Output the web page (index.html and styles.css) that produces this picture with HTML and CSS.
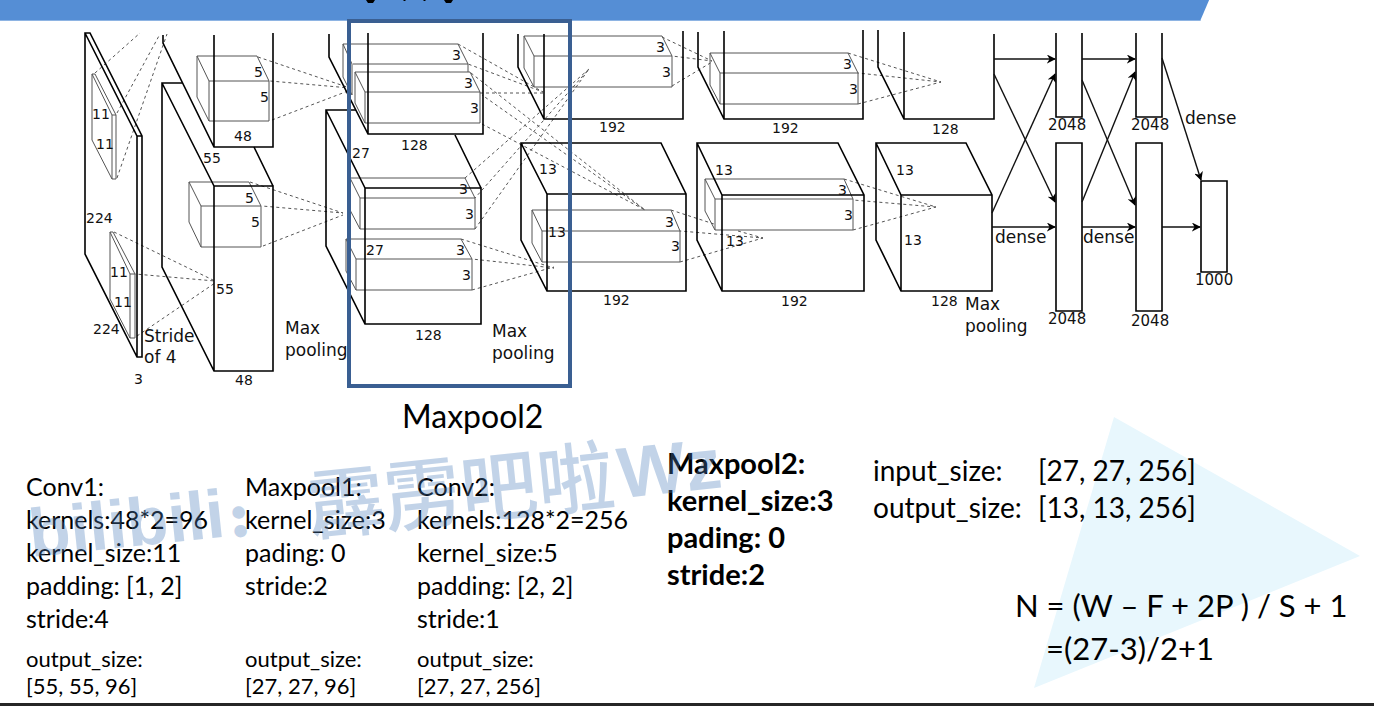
FILE: index.html
```html
<!DOCTYPE html>
<html lang="en">
<head>
<meta charset="utf-8">
<title>Maxpool2</title>
<link rel="stylesheet" href="styles.css">
</head>
<body>
<main class="slide">
  <header class="banner"></header>

  <figure class="network">
    <svg class="diagram" viewBox="0 21 1374 370" role="img" aria-label="Network architecture">
      <defs>
        <marker id="arrow" viewBox="0 0 10 10" refX="9" refY="5" markerWidth="9" markerHeight="9" markerUnits="userSpaceOnUse" orient="auto">
          <path d="M0 0L10 5L0 10L3 5Z"/>
        </marker>
      </defs>

      <!-- lower edge of the clipped title -->
      <path class="title-edge" d="M366 0H375L373 3H368ZM403 0H406L405 1H404ZM423 0H426L425 1H424ZM444 0H453L451 3H446Z"/>

      <g class="thin">
        <path d="M92 74H95L116 115V179H112L92 140ZL112 115H116M112 115V179"/>
        <path d="M110 232H113L135 274V338H130L110 299ZL130 274H135M130 274V338"/>
        <path d="M197 56H257L269 81V121H209L197 97ZL209 81H269M209 81V121"/>
        <path d="M189 182H249L261 206V247H201L189 222ZL201 206H261M201 206V247"/>
        <path d="M343 44H458L468 64V72M343 44V77L352 95V64L343 44M353 64H468"/>
        <path d="M355 72H470L480 92V123H365L355 103ZL365 92H480M365 92V123"/>
        <path d="M350 178H465L475 198V229H360L350 210ZL360 198H475M360 198V229"/>
        <path d="M346 239H461L472 259V290H356L346 271ZL356 259H472M356 259V290"/>
        <path d="M524 36H662L672 56V87H534L524 68ZL534 56H672M534 56V87"/>
        <path d="M532 210H671L680 231V262H542L532 243ZL542 231H680M542 231V262"/>
        <path d="M710 53H848L858 73V104H720L710 85ZL720 73H858M720 73V104"/>
        <path d="M705 179H844L853 199V230H715L705 211ZL715 199H853M715 199V230"/>
      </g>

      <g class="dashed">
        <path d="M95 73L140 33M117 113L160 34M117 178L167 34"/>
        <path d="M114 232L215 281L135 274M137 336L215 283"/>
        <path d="M258 57L350 88L270 81M272 120L348 91"/>
        <path d="M250 182L343 213L262 206M263 246L343 215"/>
        <path d="M458 44L543 92L468 64M480 93H543"/>
        <path d="M471 73L645 210L482 95M482 124L645 210"/>
        <path d="M465 178L589 69L475 198M475 229L589 69"/>
        <path d="M461 239L554 268L472 259M472 290L554 267"/>
        <path d="M662 37L712 61L672 56M672 86L712 62"/>
        <path d="M671 210L714 224M738 231L763 238L680 231M680 262L763 238"/>
        <path d="M848 53L941 82L858 73M858 104L941 82"/>
        <path d="M844 179L936 207L853 200M853 230L936 207"/>
      </g>

      <g class="solid">
        <path d="M85 33H90L142 136V357H137L85 254ZL137 136H142M137 136V357"/>
        <path d="M163 35V43L214 147H273V33M214 35V147"/>
        <path d="M182 83H162V267L214 371H273V186H214V371M162 83L214 186M254 147L273 186"/>
        <path d="M329 34V57L368 134H483V33M368 33V134"/>
        <path d="M356 110H326V246L365 324H481V188H365V324M326 110L365 188M455 135L481 188"/>
        <path d="M518 34V67L544 119H683V31M544 34V119"/>
        <path d="M521 143H661L686 194V291H547L521 240ZL547 194H686M547 194V291"/>
        <path d="M698 32V67L724 119H863V30M724 31V119"/>
        <path d="M697 143H838L864 195V291H722L697 240ZL722 195H864M722 195V291"/>
        <path d="M878 30V67L904 119H994V34M904 32V119"/>
        <path d="M876 143H966L992 195V291H901L876 240ZL901 195H992M901 195V291"/>
        <path d="M1056 33V117H1082V33M1136 33V117H1162V33"/>
        <path d="M1056 143H1082V311H1056ZM1136 143H1162V311H1136ZM1201 181H1227V272H1201Z"/>
      </g>

      <g class="arrows">
        <path d="M994 59H1055"/><path d="M994 74L1055 202"/>
        <path d="M992 213L1055 74"/><path d="M992 227H1055"/>
        <path d="M1082 59H1135"/><path d="M1082 80L1135 205"/>
        <path d="M1082 202L1135 72"/><path d="M1082 227H1135"/>
        <path d="M1162 58L1201 180"/><path d="M1162 227H1200"/>
      </g>

      <rect class="highlight" x="349" y="21" width="221" height="365"/>

      <g class="num">
        <text x="92" y="119">11</text><text x="96" y="149">11</text>
        <text x="86" y="223">224</text><text x="110" y="277">11</text>
        <text x="114" y="307">11</text><text x="93" y="334">224</text>
        <text x="134" y="384">3</text>
        <text x="254" y="77">5</text><text x="260" y="102">5</text>
        <text x="234" y="141">48</text><text x="203" y="163">55</text>
        <text x="245" y="203">5</text><text x="251" y="227">5</text>
        <text x="216" y="294">55</text><text x="235" y="385">48</text>
        <text x="452" y="60">3</text><text x="464" y="88">3</text><text x="470" y="113">3</text>
        <text x="401" y="150">128</text><text x="352" y="158">27</text>
        <text x="459" y="194">3</text><text x="465" y="219">3</text>
        <text x="366" y="255">27</text><text x="456" y="255">3</text><text x="462" y="280">3</text>
        <text x="415" y="340">128</text>
        <text x="656" y="52">3</text><text x="662" y="77">3</text><text x="599" y="132">192</text>
        <text x="539" y="174">13</text><text x="548" y="237">13</text>
        <text x="665" y="227">3</text><text x="671" y="251">3</text><text x="603" y="305">192</text>
        <text x="843" y="69">3</text><text x="849" y="94">3</text><text x="772" y="133">192</text>
        <text x="715" y="175">13</text><text x="726" y="246">13</text>
        <text x="838" y="195">3</text><text x="844" y="220">3</text><text x="781" y="306">192</text>
        <text x="932" y="134">128</text><text x="896" y="175">13</text>
        <text x="904" y="245">13</text><text x="931" y="306">128</text>
      </g>
      <g class="units">
        <text x="1048" y="130">2048</text><text x="1131" y="130">2048</text>
        <text x="1048" y="324">2048</text><text x="1131" y="326">2048</text>
        <text x="1195" y="285">1000</text>
      </g>
      <g class="word">
        <text x="144" y="342">Stride</text><text x="144" y="363">of 4</text>
        <text x="285" y="334">Max</text><text x="285" y="356">pooling</text>
        <text x="492" y="337">Max</text><text x="492" y="359">pooling</text>
        <text x="965" y="310">Max</text><text x="965" y="332">pooling</text>
        <text x="995" y="243">dense</text><text x="1083" y="243">dense</text>
        <text x="1185" y="124">dense</text>
      </g>
    </svg>
    <figcaption class="caption">Maxpool2</figcaption>
  </figure>

  <section class="notes">
    <div class="layer">
      <div class="params">
        <p>Conv1:</p><p>kernels:48*2=96</p><p>kernel_size:11</p><p>padding: [1, 2]</p><p>stride:4</p>
      </div>
      <div class="output"><p>output_size:</p><p>[55, 55, 96]</p></div>
    </div>
    <div class="layer">
      <div class="params">
        <p>Maxpool1:</p><p>kernel_size:3</p><p>pading: 0</p><p>stride:2</p>
      </div>
      <div class="output"><p>output_size:</p><p>[27, 27, 96]</p></div>
    </div>
    <div class="layer">
      <div class="params">
        <p>Conv2:</p><p>kernels:128*2=256</p><p>kernel_size:5</p><p>padding: [2, 2]</p><p>stride:1</p>
      </div>
      <div class="output"><p>output_size:</p><p>[27, 27, 256]</p></div>
    </div>
    <div class="current">
      <p>Maxpool2:</p><p>kernel_size:3</p><p>pading: 0</p><p>stride:2</p>
    </div>
    <div class="result">
      <dl class="sizes">
        <dt>input_size:</dt><dd>[27, 27, 256]</dd>
        <dt>output_size:</dt><dd>[13, 13, 256]</dd>
      </dl>
      <div class="formula">
        <p>N = (W – F + 2P ) / S + 1</p>
        <p class="formula-step">=(27-3)/2+1</p>
      </div>
    </div>
  </section>

  <svg class="triangle" viewBox="0 0 326 271" aria-hidden="true"><path d="M80 0L326 139L0 271Z"/></svg>
  <svg class="watermark" viewBox="0 0 720 150" aria-hidden="true">
    <g transform="translate(32 122) rotate(-6)">
      <text class="mark-latin" x="-1" y="2">bilibili</text>
      <text class="mark-colon" x="200" y="2">：</text>
      <text class="mark-cjk" x="279" y="9">霹雳吧啦</text>
      <text class="mark-name" x="591" y="5">Wz</text>
    </g>
  </svg>
</main>
</body>
</html>
```
FILE: styles.css
```css
* { box-sizing: border-box; }
body, p, figure, dl, dd { margin: 0; }
body {
  background: #fff;
  color: #000;
  font-family: Lato, "Noto Sans CJK SC", sans-serif;
}
.slide {
  position: relative;
  display: flex;
  flex-direction: column;
  min-height: 100vh;
  overflow: hidden;
  border-bottom: 3px solid #262626;
}
.banner {
  width: 88%;
  height: 21px;
  background: #558ed5;
  border-bottom: 1px solid #8eb4e3;
  clip-path: polygon(0 0, 100% 0, calc(100% - 9px) 100%, 0 100%);
}
.network { position: relative; z-index: 1; }
.diagram { display: block; width: 100%; overflow: visible; }
.thin { fill: none; stroke: #555; stroke-width: 1; }
.dashed { fill: none; stroke: #555; stroke-width: 1; stroke-dasharray: 3 3; }
.solid { fill: none; stroke: #000; stroke-width: 1.6; }
.arrows { fill: none; stroke: #111; stroke-width: 1.4; }
.arrows path { marker-end: url(#arrow); }
.highlight { fill: none; stroke: #3a5f92; stroke-width: 4; }
.num { font: 14px "DejaVu Sans", sans-serif; fill: #111; }
.units { font: 15px "DejaVu Sans", sans-serif; fill: #111; }
.word { font: 17px "DejaVu Sans", sans-serif; fill: #111; }
.caption {
  padding-left: 402px;
  font-size: 32px;
  line-height: 50px;
}
.notes {
  position: relative;
  z-index: 1;
  display: grid;
  grid-template-columns: 219fr 172fr 250fr 206fr 501fr;
  padding: 3px 0 0 26px;
}
.layer {
  display: flex;
  flex-direction: column;
  justify-content: space-between;
  padding-top: 26px;
  font-size: 25px;
  line-height: 33px;
  white-space: nowrap;
}
.output { margin-top: 10px; font-size: 22px; line-height: 27px; }
.current { font-size: 29px; font-weight: 700; line-height: 37px; white-space: nowrap; }
.sizes {
  display: grid;
  grid-template-columns: 165px auto;
  padding-top: 8px;
  font-size: 28px;
  line-height: 37px;
  white-space: nowrap;
}
.formula {
  padding: 58px 0 0 142px;
  font-size: 31px;
  line-height: 43px;
  white-space: nowrap;
}
.formula-step { padding-left: 31px; }
.triangle {
  position: absolute;
  right: 14px;
  bottom: 15px;
  width: 326px;
  fill: #e8f7fd;
}
.watermark {
  position: absolute;
  z-index: 2;
  left: 0;
  bottom: 120px;
  width: 720px;
  overflow: visible;
  fill: #4f81bd;
  opacity: 0.34;
  pointer-events: none;
}
.mark-latin { font: bold 68px "Liberation Sans", sans-serif; }
.mark-name { font: bold 72px "Liberation Sans", sans-serif; }
.mark-colon { font: 900 40px "Noto Sans CJK SC", sans-serif; stroke: #4f81bd; stroke-width: 4; }
.mark-cjk { font: 500 77px "Noto Sans CJK SC", sans-serif; }
```
